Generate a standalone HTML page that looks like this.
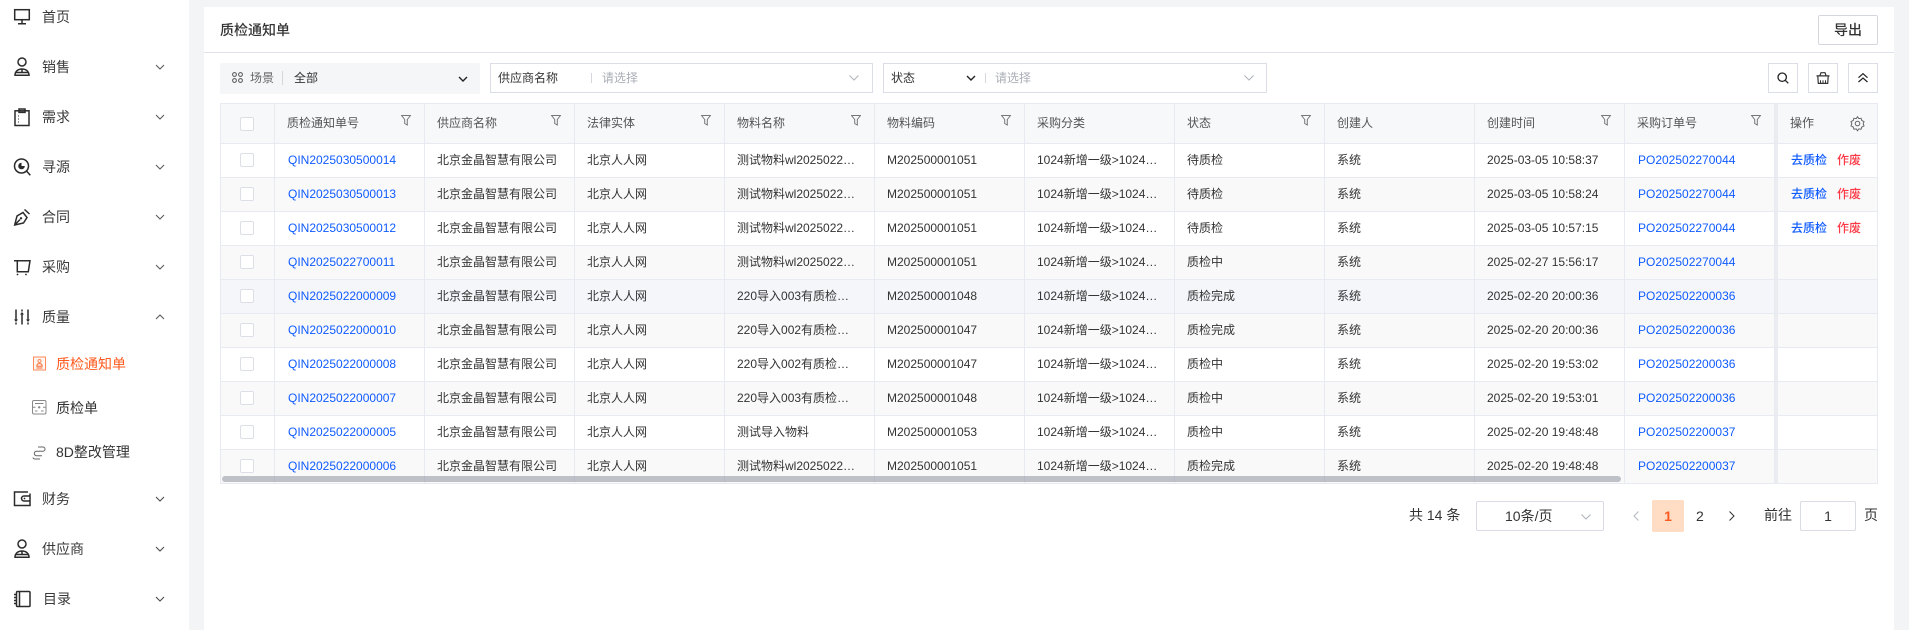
<!DOCTYPE html>
<html lang="zh-CN">
<head>
<meta charset="utf-8">
<title>质检通知单</title>
<style>
*{box-sizing:border-box}
html,body{margin:0;padding:0;width:1909px;height:630px;overflow:hidden;background:#f3f4f6}
body{position:relative;font-family:"Liberation Sans","Noto Sans CJK SC",sans-serif;font-size:12px;color:#333}
.a{position:absolute}
svg{position:absolute;overflow:visible;fill:none}
#side{left:0;top:0;width:189px;height:630px;background:#fff}
.m{position:absolute;left:42px;font-size:14px;line-height:20px;color:#3a3a3a;white-space:nowrap}
.s{left:56px;color:#333}
.ic{left:12px;width:20px;height:20px;stroke:#2b2b2b;stroke-width:1.5}
.ch{left:155px;width:10px;height:6px;stroke:#555;stroke-width:1}
#card{left:204px;top:7px;width:1690px;height:623px;background:#fff}
.box{position:absolute;height:30px;top:63px;border:1px solid #dcdee7;background:#fff}
.t{position:absolute;line-height:18px;white-space:nowrap}
.ph{color:#aaaeb6}
.div{position:absolute;width:1px;height:10px;top:73px;background:#d5d7de}
.dn{width:10px;height:6px;stroke:#b0b3ba;stroke-width:1}
.btn{position:absolute;top:63px;width:30px;height:30px;border:1px solid #dcdee7;background:#fff}
#tb{left:220px;top:103px;width:1658px;height:381px;border:1px solid #e8eaf2;border-width:1px;background:#fff;overflow:hidden}
.r{position:absolute;left:0;height:34px;width:1656px;border-top:1px solid #e8eaf2;display:flex;line-height:33px;white-space:nowrap}
.r>div{flex:none;width:150px;border-right:1px solid #e8eaf2;padding-left:12px;height:100%;overflow:hidden;color:#333}
.r>div:first-child{width:54px;padding:0;position:relative}
.r>div:last-child{width:102px;border:0;border-left:3px solid #eaecf0;padding-left:13px}
.r a{color:#0f5bff;text-decoration:none;margin-left:1px}
.r b{color:#0f5bff;font-weight:500}
.r i{color:#fb3a45;font-style:normal;font-weight:500;margin-left:10px}
.cb{position:absolute;left:19px;top:9px;width:14px;height:14px;border:1px solid #dcdfe6;border-radius:2px;background:#fff}
.h{top:0;height:40px;border-top:0;background:#f7f8fa;line-height:38px}
.h>div{color:#555;position:relative}
.w{background:#fff}.g{background:#f9f9fa}.v{background:#f5f6fa}
.f{width:10px;height:11px;right:13px;top:11px;stroke:#777;stroke-width:1}
#bar{left:222px;top:476px;width:1399px;height:6px;border-radius:3px;background:rgba(150,155,165,.6)}
.p{position:absolute;font-size:14px;line-height:20px;white-space:nowrap;color:#333}
.ib{position:absolute;border:1px solid #d9dbe5;border-radius:2px;background:#fff}
</style>
</head>
<body>
<div id="side" class="a"></div>

<svg class="ic" style="top:7px" viewBox="0 0 20 20"><rect x="2.7" y="2.7" width="14.6" height="10"/><path d="M10 13v3.4M6 16.7h8"/></svg>
<div class="m" style="top:7px">首页</div>

<svg class="ic" style="top:57px" viewBox="0 0 20 20"><circle cx="10" cy="5" r="4"/><path d="M3 18.3c0-4 3-6.3 7-6.3s7 2.300 7 6.300zM10 12v3.500M3.300 15.500h13.400"/></svg>
<div class="m" style="top:57px">销售</div>
<svg class="ch" style="top:64px" viewBox="0 0 10 6"><path d="M1 1l4 4 4-4"/></svg>

<svg class="ic" style="top:107px" viewBox="0 0 20 20"><rect x="3" y="3.800" width="14" height="14.700"/><rect x="7" y="2" width="6" height="3.400"/><path d="M6.500 8.500v1M6.500 11.500v1M6.500 14.500v1" stroke-width="1"/></svg>
<div class="m" style="top:107px">需求</div>
<svg class="ch" style="top:114px" viewBox="0 0 10 6"><path d="M1 1l4 4 4-4"/></svg>

<svg class="ic" style="top:157px" viewBox="0 0 20 20"><circle cx="9.500" cy="9" r="7"/><path d="M14.500 14l3.800 4.300"/><path d="M9.500 5.700a3.300 3.300 0 1 0 3.300 3.300h-3.300z" fill="#2b2b2b" stroke="none"/></svg>
<div class="m" style="top:157px">寻源</div>
<svg class="ch" style="top:164px" viewBox="0 0 10 6"><path d="M1 1l4 4 4-4"/></svg>

<svg class="ic" style="top:207px" viewBox="0 0 20 20"><path d="M2.700 18l2.300-9 6-3.500 4 5-3.500 5.500zM2.700 18l5.300-5.500M12.500 2.500l5 4.500"/><circle cx="9" cy="11.300" r="1.200" fill="#2b2b2b" stroke="none"/></svg>
<div class="m" style="top:207px">合同</div>
<svg class="ch" style="top:214px" viewBox="0 0 10 6"><path d="M1 1l4 4 4-4"/></svg>

<svg class="ic" style="top:257px" viewBox="0 0 20 20"><path d="M2 3.700h16l-1.700 11H5.300V3.700"/><circle cx="5.500" cy="17.500" r=".9" fill="#2b2b2b" stroke="none"/><circle cx="14" cy="17.500" r=".9" fill="#2b2b2b" stroke="none"/></svg>
<div class="m" style="top:257px">采购</div>
<svg class="ch" style="top:264px" viewBox="0 0 10 6"><path d="M1 1l4 4 4-4"/></svg>

<svg class="ic" style="top:307px" viewBox="0 0 20 20" stroke-width="1.200"><path d="M4 2.500v10M4 15.500v2M10 2.500v2M10 7.500v10M16 2.500v10M16 15.500v2"/><path d="M2 12.500h4l-2 2.500zM14 12.500h4l-2 2.500z" fill="#2b2b2b" stroke="none"/><path d="M8 7.500h4L10 5z" fill="#2b2b2b" stroke="none"/></svg>
<div class="m" style="top:307px">质量</div>
<svg class="ch" style="top:314px" viewBox="0 0 10 6"><path d="M1 5l4-4 4 4"/></svg>

<svg class="a" style="left:32px;top:356px;width:15px;height:15px;stroke:#ff8a5c;stroke-width:1" viewBox="0 0 15 15"><rect x="1.500" y="1" width="12" height="13" fill="#fff6f1"/><circle cx="7.500" cy="5" r="1.500"/><path d="M4.800 10.300c0-1.700 1.100-2.700 2.700-2.700s2.700 1 2.700 2.700zM4.500 12h6" stroke="#ff6a33"/></svg>
<div class="m s" style="top:354px;color:#ff5a1f">质检通知单</div>

<svg class="a" style="left:32px;top:400px;width:15px;height:15px;stroke:#888;stroke-width:1" viewBox="0 0 15 15"><rect x=".5" y=".5" width="13.500" height="13.500" rx="1.500"/><path d="M3 3.500h8.500M.5 7.300h3M11 7.300h3M3 11h2.500M9 11h2.500"/><circle cx="7.200" cy="7.300" r="1.200" fill="#888" stroke="none"/></svg>
<div class="m s" style="top:398px">质检单</div>

<svg class="a" style="left:32px;top:445px;width:15px;height:15px;stroke:#666;stroke-width:1" viewBox="0 0 15 15"><path d="M6 2h5a2 2 0 0 1 2 2.200 2 2 0 0 1-2 2H4.500a2.200 2.200 0 0 0-2.200 2.200 2.200 2.200 0 0 0 2.200 2.300H10"/><path d="M3 5v.1M1 12.500c0 .8.800 1.500 1.800 1.500H8"/></svg>
<div class="m s" style="top:442px">8D整改管理</div>

<svg class="ic" style="top:488px" viewBox="0 0 20 20"><path d="M18 5.500V17.500H2.500V4h13.500"/><path d="M18 8h-6a2.500 2.500 0 0 0 0 5h6"/><circle cx="12.500" cy="10.500" r=".9" fill="#2b2b2b" stroke="none"/></svg>
<div class="m" style="top:489px">财务</div>
<svg class="ch" style="top:496px;stroke:#444" viewBox="0 0 10 6"><path d="M1 1l4 4 4-4"/></svg>

<svg class="ic" style="top:539px" viewBox="0 0 20 20"><circle cx="10" cy="5" r="4"/><path d="M3 18.300c0-4 3-6.300 7-6.300s7 2.300 7 6.300zM10 12v3.500M3.300 15.500h13.400"/></svg>
<div class="m" style="top:539px">供应商</div>
<svg class="ch" style="top:546px;stroke:#444" viewBox="0 0 10 6"><path d="M1 1l4 4 4-4"/></svg>

<svg class="ic" style="top:589px" viewBox="0 0 20 20"><rect x="4.500" y="2.500" width="13.500" height="15" rx="1"/><path d="M7.500 2.500v15M2 5.500h3M2 8.500h3M2 11.500h3M2 14.500h3"/></svg>
<div class="m" style="top:589px;left:43px">目录</div>
<svg class="ch" style="top:596px;stroke:#444" viewBox="0 0 10 6"><path d="M1 1l4 4 4-4"/></svg>

<div id="card" class="a"></div>
<div class="a" style="left:204px;top:52px;width:1690px;height:1px;background:#e0e2ea"></div>
<div class="t" style="left:220px;top:21px;font-size:14px;font-weight:500;color:#333">质检通知单</div>
<div class="a" style="left:1818px;top:15px;width:60px;height:30px;border:1px solid #d5d7de;border-radius:2px"></div>
<div class="t" style="left:1834px;top:21px;font-size:14px;color:#333;font-weight:500">导出</div>

<div class="a" style="left:220px;top:63px;width:260px;height:31px;background:#f5f6f8;border-radius:2px"></div>
<svg class="a" style="left:232px;top:72px;width:11px;height:11px;stroke:#555;stroke-width:1" viewBox="0 0 11 11"><circle cx="2.500" cy="2.500" r="1.900"/><circle cx="8.500" cy="2.500" r="1.900"/><circle cx="2.500" cy="8.500" r="1.900"/><circle cx="8.500" cy="8.500" r="1.900"/></svg>
<div class="t" style="left:250px;top:69px;color:#666">场景</div>
<div class="div" style="left:282px;top:71px;height:14px"></div>
<div class="t" style="left:294px;top:69px;color:#333">全部</div>
<svg class="a" style="left:458px;top:76px;width:10px;height:6px;stroke:#222;stroke-width:1.400" viewBox="0 0 10 6"><path d="M1 1l4 4 4-4"/></svg>

<div class="box" style="left:490px;width:383px"></div>
<div class="t" style="left:498px;top:69px;color:#333">供应商名称</div>
<div class="div" style="left:591px"></div>
<div class="t ph" style="left:602px;top:69px">请选择</div>
<svg class="a dn" style="left:849px;top:75px" viewBox="0 0 10 6"><path d="M.5.500l4.500 4.500 4.500-4.500"/></svg>

<div class="box" style="left:883px;width:384px"></div>
<div class="t" style="left:891px;top:69px;color:#333">状态</div>
<svg class="a" style="left:966px;top:75px;width:10px;height:6px;stroke:#222;stroke-width:1.400" viewBox="0 0 10 6"><path d="M1 1l4 4 4-4"/></svg>
<div class="div" style="left:985px"></div>
<div class="t ph" style="left:995px;top:69px">请选择</div>
<svg class="a dn" style="left:1244px;top:75px" viewBox="0 0 10 6"><path d="M.5.500l4.500 4.500 4.500-4.500"/></svg>

<div class="btn" style="left:1768px"></div>
<svg class="a" style="left:1777px;top:72px;width:12px;height:12px;stroke:#222;stroke-width:1.300" viewBox="0 0 12 12"><circle cx="5.200" cy="5.200" r="4.200"/><path d="M8.300 8.300l3 3"/></svg>
<div class="btn" style="left:1808px"></div>
<svg class="a" style="left:1816px;top:72px;width:14px;height:12px;stroke:#333;stroke-width:1.200" viewBox="0 0 14 12"><path d="M4 3.500L5 .7h4l1 2.800M.5 3.900h13M1.800 4.200l.5 7.200h9.400l.5-7.200"/><path d="M4.500 8.300v2.800M7 8.300v2.800M9.500 8.300v2.800" stroke-width="1"/></svg>
<div class="btn" style="left:1848px"></div>
<svg class="a" style="left:1858px;top:73px;width:10px;height:10px;stroke:#222;stroke-width:1.200" viewBox="0 0 10 10"><path d="M.5 4.700l4.500-4 4.500 4M.5 9l4.500-4 4.500 4"/></svg>

<svg width="0" height="0" style="position:absolute"><defs><symbol id="fl" viewBox="0 0 10 11"><path d="M.5.500h9L6.300 4.500V10L3.700 8.500v-4z"/></symbol></defs></svg>

<div id="tb" class="a">
 <div class="r h">
  <div><span class="cb" style="top:13px"></span></div>
  <div>质检通知单号<svg class="f"><use href="#fl"/></svg></div>
  <div>供应商名称<svg class="f"><use href="#fl"/></svg></div>
  <div>法律实体<svg class="f"><use href="#fl"/></svg></div>
  <div>物料名称<svg class="f"><use href="#fl"/></svg></div>
  <div>物料编码<svg class="f"><use href="#fl"/></svg></div>
  <div>采购分类</div>
  <div>状态<svg class="f"><use href="#fl"/></svg></div>
  <div>创建人</div>
  <div>创建时间<svg class="f"><use href="#fl"/></svg></div>
  <div>采购订单号<svg class="f"><use href="#fl"/></svg></div>
  <div style="color:#555;position:relative;padding-left:12px">操作<svg style="left:72px;top:12px;width:15px;height:15px;stroke:#666;stroke-width:1" viewBox="0 0 15 15"><path d="M7.500.700l1.300 1.900 2.300-.3.700 2.200 2.200 1.100-.8 2.200.8 2.100-2.200 1.100-.7 2.200-2.300-.3-1.300 1.900-1.300-1.900-2.300.3-.7-2.200-2.200-1.100.8-2.100-.8-2.200 2.200-1.100.7-2.200 2.300.3z"/><circle cx="7.500" cy="7.500" r="2.300"/></svg></div>
 </div>
 <div class="r w" style="top:39px"><div><span class="cb"></span></div><div><a>QIN2025030500014</a></div><div>北京金晶智慧有限公司</div><div>北京人人网</div><div>测试物料wl2025022…</div><div>M202500001051</div><div>1024新增一级&gt;1024…</div><div>待质检</div><div>系统</div><div>2025-03-05 10:58:37</div><div><a>PO202502270044</a></div><div><b>去质检</b><i>作废</i></div></div>
 <div class="r g" style="top:73px"><div><span class="cb"></span></div><div><a>QIN2025030500013</a></div><div>北京金晶智慧有限公司</div><div>北京人人网</div><div>测试物料wl2025022…</div><div>M202500001051</div><div>1024新增一级&gt;1024…</div><div>待质检</div><div>系统</div><div>2025-03-05 10:58:24</div><div><a>PO202502270044</a></div><div><b>去质检</b><i>作废</i></div></div>
 <div class="r w" style="top:107px"><div><span class="cb"></span></div><div><a>QIN2025030500012</a></div><div>北京金晶智慧有限公司</div><div>北京人人网</div><div>测试物料wl2025022…</div><div>M202500001051</div><div>1024新增一级&gt;1024…</div><div>待质检</div><div>系统</div><div>2025-03-05 10:57:15</div><div><a>PO202502270044</a></div><div><b>去质检</b><i>作废</i></div></div>
 <div class="r g" style="top:141px"><div><span class="cb"></span></div><div><a>QIN2025022700011</a></div><div>北京金晶智慧有限公司</div><div>北京人人网</div><div>测试物料wl2025022…</div><div>M202500001051</div><div>1024新增一级&gt;1024…</div><div>质检中</div><div>系统</div><div>2025-02-27 15:56:17</div><div><a>PO202502270044</a></div><div></div></div>
 <div class="r v" style="top:175px"><div><span class="cb"></span></div><div><a>QIN2025022000009</a></div><div>北京金晶智慧有限公司</div><div>北京人人网</div><div>220导入003有质检…</div><div>M202500001048</div><div>1024新增一级&gt;1024…</div><div>质检完成</div><div>系统</div><div>2025-02-20 20:00:36</div><div><a>PO202502200036</a></div><div></div></div>
 <div class="r g" style="top:209px"><div><span class="cb"></span></div><div><a>QIN2025022000010</a></div><div>北京金晶智慧有限公司</div><div>北京人人网</div><div>220导入002有质检…</div><div>M202500001047</div><div>1024新增一级&gt;1024…</div><div>质检完成</div><div>系统</div><div>2025-02-20 20:00:36</div><div><a>PO202502200036</a></div><div></div></div>
 <div class="r w" style="top:243px"><div><span class="cb"></span></div><div><a>QIN2025022000008</a></div><div>北京金晶智慧有限公司</div><div>北京人人网</div><div>220导入002有质检…</div><div>M202500001047</div><div>1024新增一级&gt;1024…</div><div>质检中</div><div>系统</div><div>2025-02-20 19:53:02</div><div><a>PO202502200036</a></div><div></div></div>
 <div class="r g" style="top:277px"><div><span class="cb"></span></div><div><a>QIN2025022000007</a></div><div>北京金晶智慧有限公司</div><div>北京人人网</div><div>220导入003有质检…</div><div>M202500001048</div><div>1024新增一级&gt;1024…</div><div>质检中</div><div>系统</div><div>2025-02-20 19:53:01</div><div><a>PO202502200036</a></div><div></div></div>
 <div class="r w" style="top:311px"><div><span class="cb"></span></div><div><a>QIN2025022000005</a></div><div>北京金晶智慧有限公司</div><div>北京人人网</div><div>测试导入物料</div><div>M202500001053</div><div>1024新增一级&gt;1024…</div><div>质检中</div><div>系统</div><div>2025-02-20 19:48:48</div><div><a>PO202502200037</a></div><div></div></div>
 <div class="r g" style="top:345px"><div><span class="cb"></span></div><div><a>QIN2025022000006</a></div><div>北京金晶智慧有限公司</div><div>北京人人网</div><div>测试物料wl2025022…</div><div>M202500001051</div><div>1024新增一级&gt;1024…</div><div>质检完成</div><div>系统</div><div>2025-02-20 19:48:48</div><div><a>PO202502200037</a></div><div></div></div>
</div>
<div id="bar" class="a"></div>

<div class="p" style="left:1409px;top:505px">共 14 条</div>
<div class="ib" style="left:1476px;top:501px;width:128px;height:30px"></div>
<div class="p" style="left:1505px;top:506px">10条/页</div>
<svg class="a dn" style="left:1581px;top:514px" viewBox="0 0 10 6"><path d="M.5.500l4.500 4.500 4.500-4.500"/></svg>
<svg class="a" style="left:1633px;top:511px;width:6px;height:10px;stroke:#b5b8be;stroke-width:1" viewBox="0 0 6 10"><path d="M5.500.500L1 5l4.500 4.500"/></svg>
<div class="a" style="left:1652px;top:500px;width:32px;height:32px;background:#ffdcc4;border-radius:2px"></div>
<div class="p" style="left:1652px;top:506px;width:32px;text-align:center;color:#ff5a1f;font-weight:700">1</div>
<div class="p" style="left:1696px;top:506px">2</div>
<svg class="a" style="left:1729px;top:511px;width:6px;height:10px;stroke:#333;stroke-width:1" viewBox="0 0 6 10"><path d="M.5.500L5 5 .5 9.500"/></svg>
<div class="p" style="left:1764px;top:505px">前往</div>
<div class="ib" style="left:1800px;top:501px;width:56px;height:30px"></div>
<div class="p" style="left:1800px;top:506px;width:56px;text-align:center">1</div>
<div class="p" style="left:1864px;top:505px">页</div>
</body>
</html>
